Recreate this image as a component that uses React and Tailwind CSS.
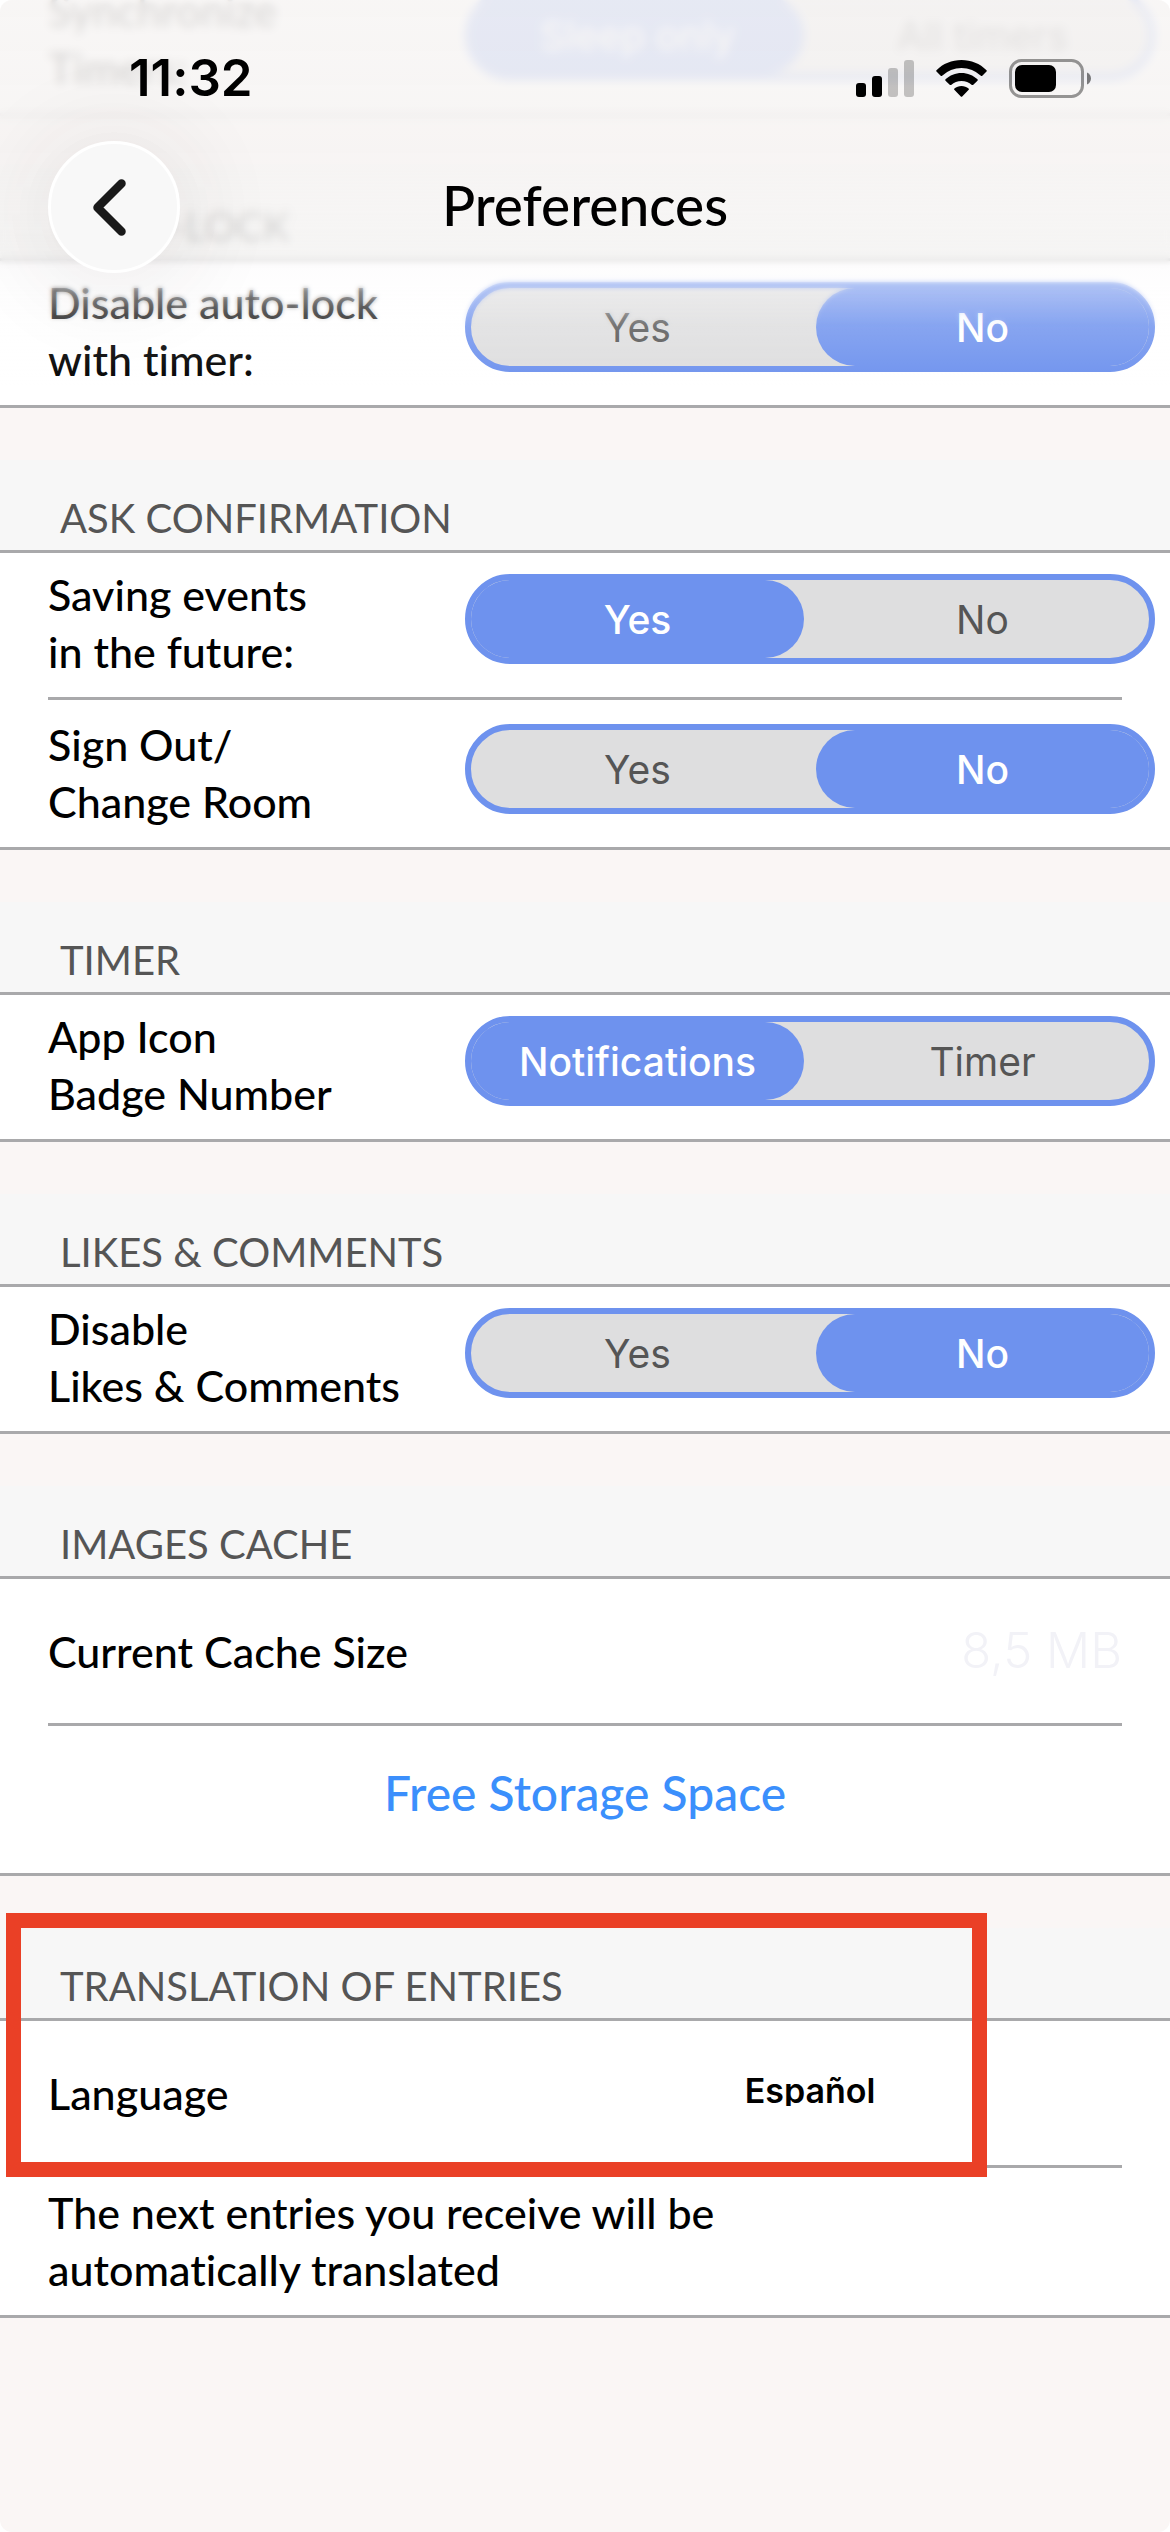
import React from "react";

const Divider = () => <div className="mx-12 mb-[3px] h-[3px] bg-[#a9a9ab]"></div>;

const Section = ({ title, children }) => (
  <section className="relative">
    {title && (
      <div className="pt-[52px]">
        <h2 className="flex h-[90px] items-end bg-[#f7f7f7] px-[60px] pb-[6px] text-[40px] leading-[52px] text-[#555555]">
          {title}
        </h2>
      </div>
    )}
    <div className="border-y-[3px] border-[#a9a9ab] bg-white">{children}</div>
  </section>
);

const Segmented = ({ name, options, selected }) => (
  <div
    role="radiogroup"
    aria-labelledby={name + "-label"}
    className="mt-[21px] grid h-[90px] flex-1 grid-cols-2 gap-3 rounded-full border-[6px] border-[#6e92ee] bg-[#dededf] font-['Inter',sans-serif]"
  >
    {options.map((option) => (
      <label
        key={option}
        className="relative flex items-center justify-center rounded-full text-[39px] leading-none text-[#555555] has-checked:bg-[#6e92ee] has-checked:font-medium has-checked:text-white"
      >
        <input type="radio" name={name} value={option} defaultChecked={option === selected} className="sr-only" />
        {option}
      </label>
    ))}
  </div>
);

const SwitchRow = ({ name, lines, options = ["Yes", "No"], selected }) => (
  <div className="flex min-h-[144px] items-start pr-[15px] pl-12">
    <div id={name + "-label"} className="w-[417px] shrink-0 pt-[13px] text-[43px] leading-[57px] font-medium">
      {lines[0]}
      <br />
      {lines[1]}
    </div>
    <Segmented name={name} options={options} selected={selected} />
  </div>
);

const StatusIcons = () => (
  <svg className="h-[40px] w-[236px]" viewBox="0 0 236 40" fill="none" aria-hidden="true">
    <rect x="0" y="25" width="10" height="14" rx="3" fill="#000" />
    <rect x="16" y="18" width="10" height="21" rx="3" fill="#000" />
    <rect x="32" y="10" width="10" height="29" rx="3" fill="#000" fillOpacity="0.22" />
    <rect x="48" y="2" width="10" height="37" rx="3" fill="#000" fillOpacity="0.22" />
    <path
      fill="#000"
      d="M105.500 2c9.600 0 18.600 3.700 25 10.200.4.400.4 1 0 1.400l-4.200 4.200c-.4.400-1 .4-1.400 0a28 28 0 0 0-38.800 0c-.4.400-1 .4-1.400 0l-4.200-4.200c-.4-.4-.4-1 0-1.400C86.900 5.700 95.900 2 105.500 2Z"
    />
    <path
      fill="#000"
      d="M105.500 15c6.100 0 11.700 2.300 16 6.300.4.400.4 1 0 1.400l-4.200 4.100c-.4.400-1 .4-1.400.1a15.500 15.500 0 0 0-20.800 0c-.4.300-1 .3-1.400-.1l-4.200-4.100c-.4-.4-.4-1 0-1.400 4.300-4 9.900-6.300 16-6.300Z"
    />
    <path
      fill="#000"
      d="M105.500 28c2.700 0 5.200 1 7.100 2.400.5.400.5.900.1 1.300l-6.500 6.800c-.4.400-1 .4-1.400 0l-6.500-6.800c-.4-.4-.4-.9.1-1.300 1.900-1.400 4.400-2.400 7.100-2.400Z"
    />
    <rect x="154.500" y="2.500" width="72" height="36" rx="11" stroke="#000" strokeOpacity="0.4" strokeWidth="3" />
    <rect x="159" y="7" width="41" height="27" rx="7" fill="#000" />
    <path d="M231 14.500c2.600 1 4 3.500 4 6s-1.400 5-4 6Z" fill="#000" fillOpacity="0.5" />
  </svg>
);

// Translucent bar that floats over the scrolled list
const Header = () => (
  <header className="absolute inset-x-0 top-0 h-[400px]">
    <div className="absolute inset-0 mask-[linear-gradient(to_bottom,black_270px,transparent_330px)] backdrop-blur-[2px]"></div>
    <div className="absolute inset-0 mask-[linear-gradient(to_bottom,black_240px,transparent_285px)] backdrop-blur-[4px]"></div>
    <div className="absolute inset-0 bg-[linear-gradient(to_bottom,rgba(247,245,244,0.88)_0px,rgba(246,244,243,0.86)_170px,rgba(245,244,243,0.75)_256px,rgba(252,251,252,0.6)_266px,rgba(253,252,253,0.45)_285px,rgba(254,254,254,0.18)_325px,rgba(255,255,255,0)_390px)]"></div>
    <div className="relative">
      <div className="flex h-[117px] items-end justify-between pr-[78px] pb-[19px] pl-[129px]">
        <span className="font-['Inter',sans-serif] text-[51px] leading-[40px] font-semibold">11:32</span>
        <StatusIcons />
      </div>
      <div className="mt-6 grid grid-cols-[132px_1fr_132px] items-center px-12">
        <button
          type="button"
          aria-label="Back"
          className="flex size-[132px] items-center justify-center rounded-full border-[3px] border-white bg-[#f8f8f8] shadow-[0_6px_90px_20px_rgba(60,40,40,0.07)]"
        >
          <svg className="h-[64px] w-[48px]" viewBox="0 0 48 64" fill="none" aria-hidden="true">
            <path d="M31.500 8.500 7.500 32.500l24 24" stroke="#1a1a1a" strokeWidth="8.500" strokeLinecap="round" strokeLinejoin="round" />
          </svg>
        </button>
        <h1 className="pb-1 text-center text-[55px] leading-[64px] font-medium">Preferences</h1>
      </div>
    </div>
  </header>
);

const App = () => {
  return (
    <main className="relative min-h-screen overflow-hidden rounded-xl bg-[#faf6f5] font-['Lato',sans-serif] text-black [font-variant-ligatures:none]">
      <div className="-mt-[34px]">
        <Section>
          <SwitchRow
            name="sync"
            lines={["Synchronize", "Timers:"]}
            options={["Sleep only", "All timers"]}
            selected="Sleep only"
          />
        </Section>
        <Section title="AUTO-LOCK">
          <SwitchRow name="auto-lock" lines={["Disable auto-lock", "with timer:"]} selected="No" />
        </Section>
        <Section title="ASK CONFIRMATION">
          <SwitchRow name="saving" lines={["Saving events", "in the future:"]} selected="Yes" />
          <Divider />
          <SwitchRow name="sign-out" lines={["Sign Out/", "Change Room"]} selected="No" />
        </Section>
        <Section title="TIMER">
          <SwitchRow
            name="badge"
            lines={["App Icon", "Badge Number"]}
            options={["Notifications", "Timer"]}
            selected="Notifications"
          />
        </Section>
        <Section title="LIKES & COMMENTS">
          <SwitchRow name="likes" lines={["Disable", "Likes & Comments"]} selected="No" />
        </Section>
        <Section title="IMAGES CACHE">
          <div className="flex min-h-[144px] items-center justify-between px-12">
            <span className="text-[43px] leading-[57px] font-medium">Current Cache Size</span>
            <span className="font-['Inter',sans-serif] text-[49px] leading-[60px] font-light text-[#f2f2f7]">8,5 MB</span>
          </div>
          <Divider />
          <button type="button" className="block h-[144px] w-full pb-4 text-center text-[48px] font-medium text-[#3b8ffc]">
            Free Storage Space
          </button>
        </Section>
        <Section title="TRANSLATION OF ENTRIES">
          <div className="flex min-h-[144px] items-center px-12">
            <label htmlFor="language" className="w-[450px] shrink-0 text-[43px] leading-[57px] font-medium">
              Language
            </label>
            <select
              id="language"
              className="h-[57px] flex-1 appearance-none bg-transparent pb-4 text-center font-['Inter',sans-serif] text-[34px] font-semibold [text-align-last:center]"
            >
              <option>Español</option>
            </select>
          </div>
          <Divider />
          <p className="min-h-[144px] px-12 pt-[13px] text-[43px] leading-[57px] font-medium">
            The next entries you receive will be
            <br />
            automatically translated
          </p>
          <div className="pointer-events-none absolute top-[37px] right-[183px] left-[6px] h-[264px] border-[15px] border-[#ea4026]"></div>
        </Section>
      </div>
      <Header />
    </main>
  );
};

export default App;
